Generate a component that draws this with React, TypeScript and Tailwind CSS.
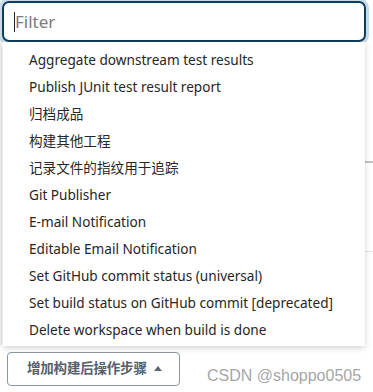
const items = [
  'Aggregate downstream test results',
  'Publish JUnit test result report',
  '归档成品',
  '构建其他工程',
  '记录文件的指纹用于追踪',
  'Git Publisher',
  'E-mail Notification',
  'Editable Email Notification',
  'Set GitHub commit status (universal)',
  'Set build status on GitHub commit [deprecated]',
  'Delete workspace when build is done',
]

export default function App() {
  return (
    <div
      className="relative w-[373px] h-[392px] overflow-hidden bg-white"
      style={{ fontFamily: '"Noto Sans", "Noto Sans CJK SC", sans-serif' }}
    >
      {/* page behind the dropdown */}
      <div className="absolute right-0 top-[161px] h-[2px] w-[10px] bg-[#c4c4c4]" />
      <div className="absolute right-0 top-[251px] h-px w-[10px] bg-[#e4e4e4]" />
      <div className="absolute left-0 top-0 h-[345px] w-[2px] bg-[#eef0f2]" />

      <div className="relative flex flex-col pl-[2px] pt-px w-[370px]">
        {/* filter input */}
        <div className="rounded-[7px] shadow-[0_0_0_3px_#c6dcea] w-[364px]">
          <div className="h-[41px] rounded-[7px] border-2 border-[#103d5e] bg-white flex items-center pl-[10px]">
            <span className="w-px h-[20px] bg-[#222]" />
            <span className="text-[17px] text-[#7b7b7b] leading-none">Filter</span>
          </div>
        </div>

        {/* dropdown list */}
        <div className="ml-px w-[362px] bg-white pt-[5px] pb-[2px] shadow-[0_2px_6px_rgba(0,0,0,0.18)]">
          {items.map((t) => (
            <div key={t} className="h-[27px] flex items-center pl-[26px] text-[13.6px] text-[#262626] whitespace-nowrap">
              {t}
            </div>
          ))}
        </div>
      </div>

      {/* bottom row */}
      <div className="flex items-center mt-[3px] pl-[7px]">
        <div className="h-[34px] w-[173px] rounded-[4px] border border-[#8d96a0] flex items-center pl-[19px] gap-[7px]">
          <span className="text-[13.5px] font-bold text-[#56606d] tracking-[-0.2px]">增加构建后操作步骤</span>
          <svg width="8" height="5" viewBox="0 0 8 5" className="mt-[-1px]">
            <path d="M0 5 L4 0 L8 5 Z" fill="#5d6775" />
          </svg>
        </div>
        <span
          className="ml-[27px] mt-[15px] text-[16px] text-[#a6a6a6]"
          style={{ fontFamily: '"Liberation Sans", Arial, sans-serif' }}
        >
          CSDN @shoppo0505
        </span>
      </div>
    </div>
  )
}
